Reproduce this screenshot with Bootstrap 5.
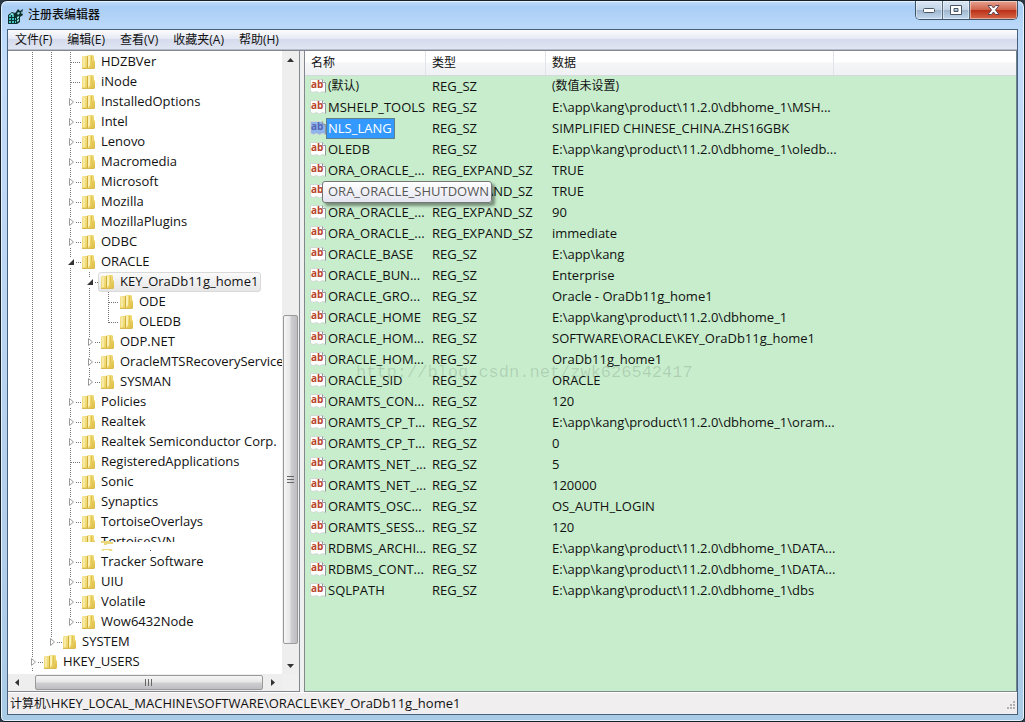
<!DOCTYPE html>
<html lang="zh-CN">
<head>
<meta charset="utf-8">
<meta name="viewport" content="width=device-width, initial-scale=1">
<title>注册表编辑器</title>
<link href="https://cdn.jsdelivr.net/npm/bootstrap@5.3.0/dist/css/bootstrap.min.css" rel="stylesheet">
<style>
  html, body { height: 100%; }
  body { font: 13px/20px "Open Sans", "Noto Sans CJK SC", sans-serif; color: #111; background: #2b3947; overflow: hidden; }
  .zh { font-size: 12px; }
  .win { height: 100vh; border: 1px solid #16202b; border-radius: 7px 7px 5px 5px; padding: 0 6px 6px;
    background: linear-gradient(180deg, #c3defa 0, #a9cdf5 6px, #b9d8f9 24px, #c2dcfa 60px, #b4cfee 70%, #a9cbe6 100%); box-shadow: inset 0 0 0 1px #e6f2fc; }
  .titlebar { height: 28px; }
  .titlebar h1 { font-size: 12px; line-height: 20px; }
  .capbtns { height: 19px; border: 1px solid #3f5468; border-top: 0; border-radius: 0 0 5px 5px; overflow: hidden; }
  .capbtns button { border: 0; padding: 0; width: 27px; border-right: 1px solid #566b80; background: linear-gradient(#dbe8f5, #c3d4e6 48%, #9db4cd 50%, #c3d9ee); box-shadow: inset 0 0 0 1px #ffffff70; display: grid; place-items: center; }
  .capbtns button.close-win { width: 47px; border-right: 0; background: linear-gradient(#e6a392, #d1644c 48%, #b92d16 50%, #d8694a); }
  .client { border: 1px solid #47607c; background: #f0eeee; }
  .menubar { height: 20px; gap: 15px; padding-left: 7px; background: linear-gradient(#fcfcfe, #e6eaf4 45%, #d5dbec 50%, #e0e5f3); border-bottom: 1px solid #b6bccc; }
  .menubar a { color: #111; text-decoration: none; line-height: 19px; font-size: 12px; }
  .work { border-top: 1px solid #828790; }
  .treepane { width: 292px; border-right: 1px solid #828790; border-bottom: 1px solid #828790; background: #fff; }
  .splitter { width: 4px; background: #f0f0f0; }
  .tree { padding-left: 16px; padding-top: 1px; }
  .tree li { height: 20px; display: flex; white-space: nowrap; }
  .tree svg { flex: none; }
  .tree .label { padding-left: 5px; line-height: 19px; }
  .tree .picked { display: flex; height: 20px; margin-left: -2px; padding: 0 2px 0 1px; border: 1px solid #d9d9d9; border-radius: 3px; background: linear-gradient(#fafafa, #e6e6e6); }
  .tree .picked svg { margin-top: -1px; }
  .tree .picked .label { line-height: 17px; }
  .tree .torn { height: 10px; overflow: hidden; display: flex; }
  .tree .scrap { position: absolute; left: 18px; top: 9px; }
  .sb { background: #eeeeee; }
  .sb button { border: 0; padding: 0; width: 17px; height: 17px; background: none; display: grid; place-items: center; flex: none; }
  .vbar { width: 17px; }
  .hbar { height: 17px; }
  .thumb { border: 1px solid #9a9a9a; border-radius: 2px; display: grid; place-items: center; }
  .vbar .thumb { width: 15px; background: linear-gradient(90deg, #f6f6f6, #e6e6e8 48%, #cfcfd2 52%, #bebec2); }
  .hbar .thumb { height: 15px; background: linear-gradient(#f6f6f6, #e6e6e8 48%, #cfcfd2 52%, #bebec2); }
  .corner { width: 17px; background: #f0f0f0; }
  .listpane { background: #c7edcc; border: 1px solid #828790; border-top: 0; border-right-color: #6e8290; }
  .reg { table-layout: fixed; width: 100%; border-collapse: separate; border-spacing: 0; }
  .reg th { height: 25px; padding: 0 0 0 6px; font-weight: 400; font-size: 12px; background: linear-gradient(#fff 45%, #f5f6f8 50%, #eff1f4); border-right: 1px solid #dfe3e8; border-bottom: 1px solid #d5d9de; }
  .reg th:last-child { border-right: 0; }
  .reg td { height: 21px; padding: 0 0 0 6px; line-height: 20px; white-space: nowrap; vertical-align: top; }
  .reg td:first-child { padding-left: 5px; }
  .reg td svg { flex: none; margin-top: 2px; }
  .nm { padding: 0 2px; height: 21px; line-height: 20px; }
  .chosen .nm { background: #3399ff; color: #fff; border: 1px solid #5f7f8c; line-height: 18px; padding: 0 2px 0 1px; }
  .c1 { width: 121px; } .c2 { width: 120px; } .c3 { width: 288px; }
  .tip { position: absolute; left: 12px; top: 0; z-index: 2; padding: 0 2px 0 5px; height: 22px; line-height: 19px; color: #575757; border: 1px solid #767676; border-radius: 3px; background: linear-gradient(#fff, #e4e5f0); box-shadow: 3px 3px 3px #0006; }
  .stamp { position: absolute; left: 51px; top: 311px; font: 17px/22px "Liberation Mono", monospace; color: #00000021; pointer-events: none; }
  .status { height: 22px; border-top: 1px solid #fff; line-height: 21px; padding: 0 1px 0 2px; }
</style>
</head>
<body>
<svg class="position-absolute" width="0" height="0" aria-hidden="true">
  <defs>
    <linearGradient id="fg" x1="0" x2="1" y2="1"><stop offset="0" stop-color="#f3e193"/><stop offset=".5" stop-color="#f0d970"/><stop offset="1" stop-color="#dcb93f"/></linearGradient>
  </defs>
</svg>
<div class="win d-flex flex-column">
  <header class="titlebar d-flex align-items-start flex-shrink-0">
    <svg class="mt-2 me-1 flex-shrink-0" width="17" height="15" viewBox="0 0 17 15" aria-hidden="true">
      <path d="M1 6l4-3 3 1 1-1 2-3 2 2 3-2-1 4 1 2-3 2v5l-3 2H1z" fill="#10302f"/>
      <path d="M2 6h2v2H2zM5 6h2v2H5zM2 9h2v2H2zM5 9h2v2H5zM2 12h2v2H2zM5 12h2v2H5zM8 9h1v2H8zM8 12h1v2H8z" fill="#3fc4c1"/>
      <path d="M3 5l2-1 2 1-1 1H4zM10 4l2-1 1 1-2 2zM10 8l2-1v2l-2 1zM10 11l2-1v2l-2 1zM14 4l1-2v3z" fill="#8ae4e0"/>
    </svg>
    <h1 class="mb-0 mt-1 flex-grow-1">注册表编辑器</h1>
    <div class="capbtns d-flex">
      <button type="button" aria-label="最小化"><svg width="14" height="8" viewBox="0 0 14 8"><rect x="1.500" y="2.500" width="11" height="4" rx="1" fill="#fff" stroke="#4a5666"/></svg></button>
      <button type="button" aria-label="最大化"><svg width="13" height="11" viewBox="0 0 13 11"><path d="M.5.5h11v9H.5zM4 3.500h4v3H4z" fill="#fff" fill-rule="evenodd" stroke="#4a5666"/></svg></button>
      <button type="button" class="close-win" aria-label="关闭"><svg width="13" height="11" viewBox="0 0 13 11"><path d="M1 .5h3.500l2 2.500 2-2.500H12L8.500 5 12 9.500H8.500l-2-2.500-2 2.500H1L4.500 5z" fill="#fff" stroke="#5c4450"/></svg></button>
    </div>
  </header>
  <div class="client flex-grow-1 d-flex flex-column overflow-hidden">
    <nav class="menubar d-flex flex-shrink-0" aria-label="菜单">
      <a href="#">文件(F)</a><a href="#">编辑(E)</a><a href="#">查看(V)</a><a href="#">收藏夹(A)</a><a href="#">帮助(H)</a>
    </nav>
    <main class="work flex-grow-1 d-flex overflow-hidden">
      <section class="treepane d-flex flex-column flex-shrink-0" aria-label="注册表项">
        <div class="d-flex flex-grow-1 overflow-hidden">
          <ul class="tree list-unstyled mb-0 flex-grow-1 overflow-hidden" id="tree"></ul>
          <div class="sb vbar d-flex flex-column align-items-center flex-shrink-0">
            <button type="button" aria-label="向上"><svg width="7" height="4"><path d="M0 4l3.500-4L7 4z" fill="#333"/></svg></button>
            <div style="flex:247"></div>
            <div class="thumb" style="flex:327"><svg width="7" height="8"><path d="M0 .5h7M0 3.500h7M0 6.500h7" stroke="#666"/></svg></div>
            <div style="flex:13"></div>
            <button type="button" aria-label="向下"><svg width="7" height="4"><path d="M0 0h7L3.500 4z" fill="#333"/></svg></button>
          </div>
        </div>
        <div class="d-flex flex-shrink-0">
          <div class="sb hbar d-flex align-items-center flex-grow-1">
            <button type="button" aria-label="向左"><svg width="4" height="7"><path d="M4 0v7L0 3.500z" fill="#333"/></svg></button>
            <div style="flex:10"></div>
            <div class="thumb" style="flex:227"><svg width="8" height="7"><path d="M.5 0v7M3.500 0v7M6.500 0v7" stroke="#666"/></svg></div>
            <div style="flex:2"></div>
            <button type="button" aria-label="向右"><svg width="4" height="7"><path d="M0 0v7l4-3.500z" fill="#333"/></svg></button>
          </div>
          <div class="corner"></div>
        </div>
      </section>
      <div class="splitter flex-shrink-0"></div>
      <section class="listpane flex-grow-1 position-relative overflow-hidden" aria-label="值">
        <table class="reg">
          <colgroup><col class="c1"><col class="c2"><col class="c3"><col></colgroup>
          <thead><tr><th>名称</th><th>类型</th><th>数据</th><th></th></tr></thead>
          <tbody id="values"></tbody>
        </table>
        <div class="stamp">http://blog.csdn.net/zwk626542417</div>
      </section>
    </main>
    <footer class="status d-flex justify-content-between flex-shrink-0">
      <span><span class="zh">计算机</span>\HKEY_LOCAL_MACHINE\SOFTWARE\ORACLE\KEY_OraDb11g_home1</span>
      <svg class="align-self-end mb-1" width="9" height="9" fill="#b5b0b0"><path d="M6 0h2v2H6zM3 3h2v2H3zM6 3h2v2H6zM0 6h2v2H0zM3 6h2v2H3zM6 6h2v2H6z"/></svg>
    </footer>
  </div>
</div>
<script src="https://cdn.jsdelivr.net/npm/bootstrap@5.3.0/dist/js/bootstrap.bundle.min.js"></script>
<script>
  // Guide cells: | line, t branch, l last branch, c closed key, o open key, e last closed key
  const tree = [
    ['||t', 'HDZBVer'], ['||t', 'iNode'], ['||c', 'InstalledOptions'], ['||c', 'Intel'], ['||c', 'Lenovo'],
    ['||c', 'Macromedia'], ['||c', 'Microsoft'], ['||c', 'Mozilla'], ['||c', 'MozillaPlugins'], ['||c', 'ODBC'],
    ['||o', 'ORACLE'], ['|||o', 'KEY_OraDb11g_home1', 'picked'], ['||||t', 'ODE'], ['||||l', 'OLEDB'],
    ['|||c', 'ODP.NET'], ['|||c', 'OracleMTSRecoveryService'], ['|||e', 'SYSMAN'],
    ['||c', 'Policies'], ['||c', 'Realtek'], ['||c', 'Realtek Semiconductor Corp.'], ['||t', 'RegisteredApplications'],
    ['||c', 'Sonic'], ['||c', 'Synaptics'], ['||c', 'TortoiseOverlays'], ['|||', 'TortoiseSVN', 'torn'],
    ['||c', 'Tracker Software'], ['||c', 'UIU'], ['||c', 'Volatile'], ['||e', 'Wow6432Node'], ['|e', 'SYSTEM'], ['c', 'HKEY_USERS']
  ];
  const dot = d => `<path d="${d}" stroke="#777" stroke-dasharray="1 1"/>`;
  const closed = '<path d="M7.500 6.500v7l4-3.500z" fill="#fff" stroke="#999"/>';
  const cells = {
    '|': dot('M8.500 0v20'),
    t: dot('M8.500 0v20M9 10.500h9'),
    l: dot('M8.500 0v11M9 10.500h9'),
    c: dot('M8.500 0v5M8.500 16v4M14 10.500h5') + closed,
    e: dot('M8.500 0v5M14 10.500h5') + closed,
    o: dot('M8.500 0v5M8.500 16v4M14 10.500h5') + '<path d="M12 7v6H6z" fill="#333"/>'
  };
  const folder = `<svg width="15" height="20" viewBox="0 0 15 20"><path d="M1 5l1-1h4l1-1h5l1 1v4l1 1v7l-1 1H1z" fill="url(#fg)"/><path d="M2 5h2v10H2z" fill="#f7eaa6"/><path d="M7 4l2-1v10l-2 3z" fill="#fbf1b4"/><path d="M6.500 4v12" stroke="#cfae3c"/><path d="M10.500 4v6l2.500 5" fill="none" stroke="#e0c253"/><path d="M1 16.500h12" stroke="#d8ba52"/></svg>`;
  const scrap = `<svg class="scrap" width="56" height="11"><path d="M2 0h9v1h3v2H8v1H5V2H2zM2 9l2-1h8l2 2h-3l-2-1H5l-1 1z" fill="#ecd878"/><path d="M51 9h1v1h-1z" fill="#444"/></svg>`;
  document.getElementById('tree').innerHTML = tree.map(([g, name, kind]) => {
    const guides = [...g].map(k => `<svg width="19" height="20">${cells[k]}</svg>`).join('');
    const body = folder + `<span class="label">${name}</span>`;
    const boxed = kind === 'torn' ? `<div class="position-relative"><div class="torn">${body}</div>${scrap}</div>` : kind ? `<div class="${kind}">${body}</div>` : body;
    return `<li>${guides}${boxed}</li>`;
  }).join('');

  const S = 'REG_SZ', X = 'REG_EXPAND_SZ', P = 'E:\\app\\kang\\product\\11.2.0\\dbhome_1';
  const values = [
    ['(默认)', S, '(数值未设置)'], ['MSHELP_TOOLS', S, P + '\\MSH...'], ['NLS_LANG', S, 'SIMPLIFIED CHINESE_CHINA.ZHS16GBK'],
    ['OLEDB', S, P + '\\oledb...'], ['ORA_ORACLE_...', X, 'TRUE'], ['', X, 'TRUE'], ['ORA_ORACLE_...', X, '90'],
    ['ORA_ORACLE_...', X, 'immediate'], ['ORACLE_BASE', S, 'E:\\app\\kang'], ['ORACLE_BUN...', S, 'Enterprise'],
    ['ORACLE_GRO...', S, 'Oracle - OraDb11g_home1'], ['ORACLE_HOME', S, P], ['ORACLE_HOM...', S, 'SOFTWARE\\ORACLE\\KEY_OraDb11g_home1'],
    ['ORACLE_HOM...', S, 'OraDb11g_home1'], ['ORACLE_SID', S, 'ORACLE'], ['ORAMTS_CON...', S, '120'], ['ORAMTS_CP_T...', S, P + '\\oram...'],
    ['ORAMTS_CP_T...', S, '0'], ['ORAMTS_NET_...', S, '5'], ['ORAMTS_NET_...', S, '120000'], ['ORAMTS_OSC...', S, 'OS_AUTH_LOGIN'],
    ['ORAMTS_SESS...', S, '120'], ['RDBMS_ARCHI...', S, P + '\\DATA...'], ['RDBMS_CONT...', S, P + '\\DATA...'], ['SQLPATH', S, P + '\\dbs']
  ];
  const icon = (bg, ink) => `<svg width="16" height="16" viewBox="0 0 16 16"><path d="M.5 1.500h12l3 3v10l-3-1-3 1.500-3-1.500-3 1-3-1z" fill="${bg}" stroke="#cfd8d3"/><path d="M12.500 1.500v3h3v10" fill="none" stroke="#8f9a98"/><text x="1" y="10" font-family="Open Sans, sans-serif" font-weight="700" font-size="10" fill="${ink}">ab</text></svg>`;
  document.getElementById('values').innerHTML = values.map(([n, t, d], i) => {
    const on = i === 2;
    const z = i === 0 ? ' zh' : '';
    const label = n ? `<span class="nm${z}">${n}</span>` : '<span class="tip">ORA_ORACLE_SHUTDOWN</span>';
    return `<tr class="${on ? 'chosen' : ''}"><td><div class="d-flex position-relative">${on ? icon('#8fb4ea', '#5566b5') : icon('#fff', '#b8452c')}${label}</div></td><td>${t}</td><td class="${z}">${d}</td><td></td></tr>`;
  }).join('');
</script>
</body>
</html>
